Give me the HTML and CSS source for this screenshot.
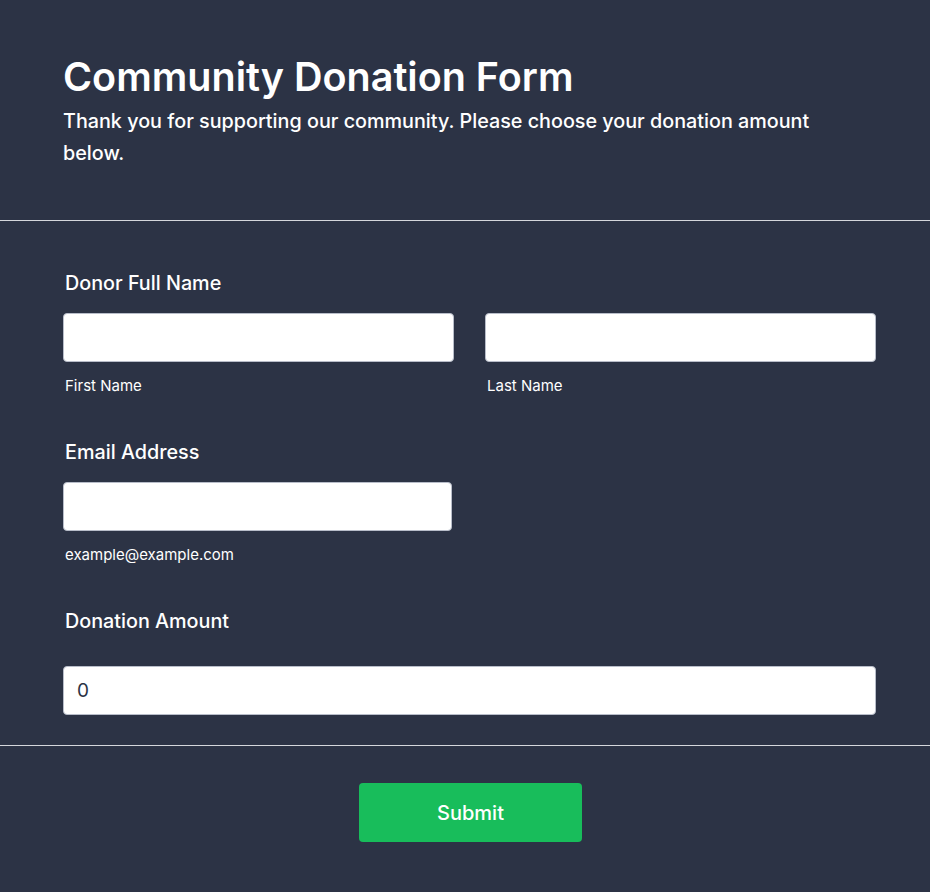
FILE: index.html
```html
<!DOCTYPE html>
<html>
  <head>
    <title>Community Donation Form</title>
    <meta charset="utf-8">
    <meta name="viewport" content="width=device-width">
    <link rel="stylesheet" href="styles.css">
  </head>
<body>
  <header class="form_header">
    <h1>Community Donation Form</h1>
    <p>Thank you for supporting our community. Please choose your donation amount below.</p>
  </header>
  <form class="form_body" onsubmit="return false">
    <div class="field">
      <label class="field_label">Donor Full Name</label>
      <div class="name_row">
        <div class="sub_field">
          <input type="text" id="first_name" />
          <span class="sub_label">First Name</span>
        </div>
        <div class="sub_field">
          <input type="text" id="last_name" />
          <span class="sub_label">Last Name</span>
        </div>
      </div>
    </div>
    <div class="field">
      <label class="field_label" for="email">Email Address</label>
      <div class="sub_field email_field">
        <input type="email" id="email" />
        <span class="sub_label">example@example.com</span>
      </div>
    </div>
    <div class="field amount_field">
      <label class="field_label" for="amount">Donation Amount</label>
      <input type="text" id="amount" value="0" />
    </div>
  </form>
  <footer class="form_footer">
    <button type="button" class="submit_bt">Submit</button>
  </footer>
</body>
</html>
```

FILE: styles.css
```css
* { margin: 0; padding: 0; box-sizing: border-box; }
body { background: #2c3345; color: #fff; font-family: Inter, "Noto Sans", sans-serif; }

.form_header { padding: 53px 63px 51px; border-bottom: 1px solid #d5d7dc; }
.form_header h1 { font-size: 39.5px; line-height: 48px; font-weight: 600; }
.form_header p { font-size: 19.75px; line-height: 32px; font-weight: 500; margin-top: 4px; max-width: 780px; }

.form_body { padding: 50px 54px 30px 63px; border-bottom: 1px solid #d5d7dc; }
.field { margin-bottom: 45px; }
.field:last-child { margin-bottom: 0; }
.field_label { display: block; font-size: 19.75px; line-height: 24px; font-weight: 500; padding-left: 2px; margin-bottom: 18px; }
.amount_field .field_label { margin-bottom: 33px; }

.name_row { display: grid; grid-template-columns: 1fr 1fr; column-gap: 31px; }
.sub_field { display: flex; flex-direction: column; }
.email_field { width: 389px; }
.sub_label { font-size: 15px; line-height: 18px; padding-left: 2px; margin-top: 15px; color: #fff; }

input { width: 100%; height: 49px; border: 1px solid #b8bdc9; border-radius: 4px; background: #fff; padding: 0 13px; font-family: Inter, sans-serif; font-size: 19px; color: #2c3345; }

.form_footer { display: flex; justify-content: center; padding: 37px 52px 50px 63px; }
.submit_bt { width: 223px; height: 59px; border: 0; border-radius: 4px; background: #18bd5b; color: #fff; font-family: Inter, sans-serif; font-size: 20px; font-weight: 500; }
```
